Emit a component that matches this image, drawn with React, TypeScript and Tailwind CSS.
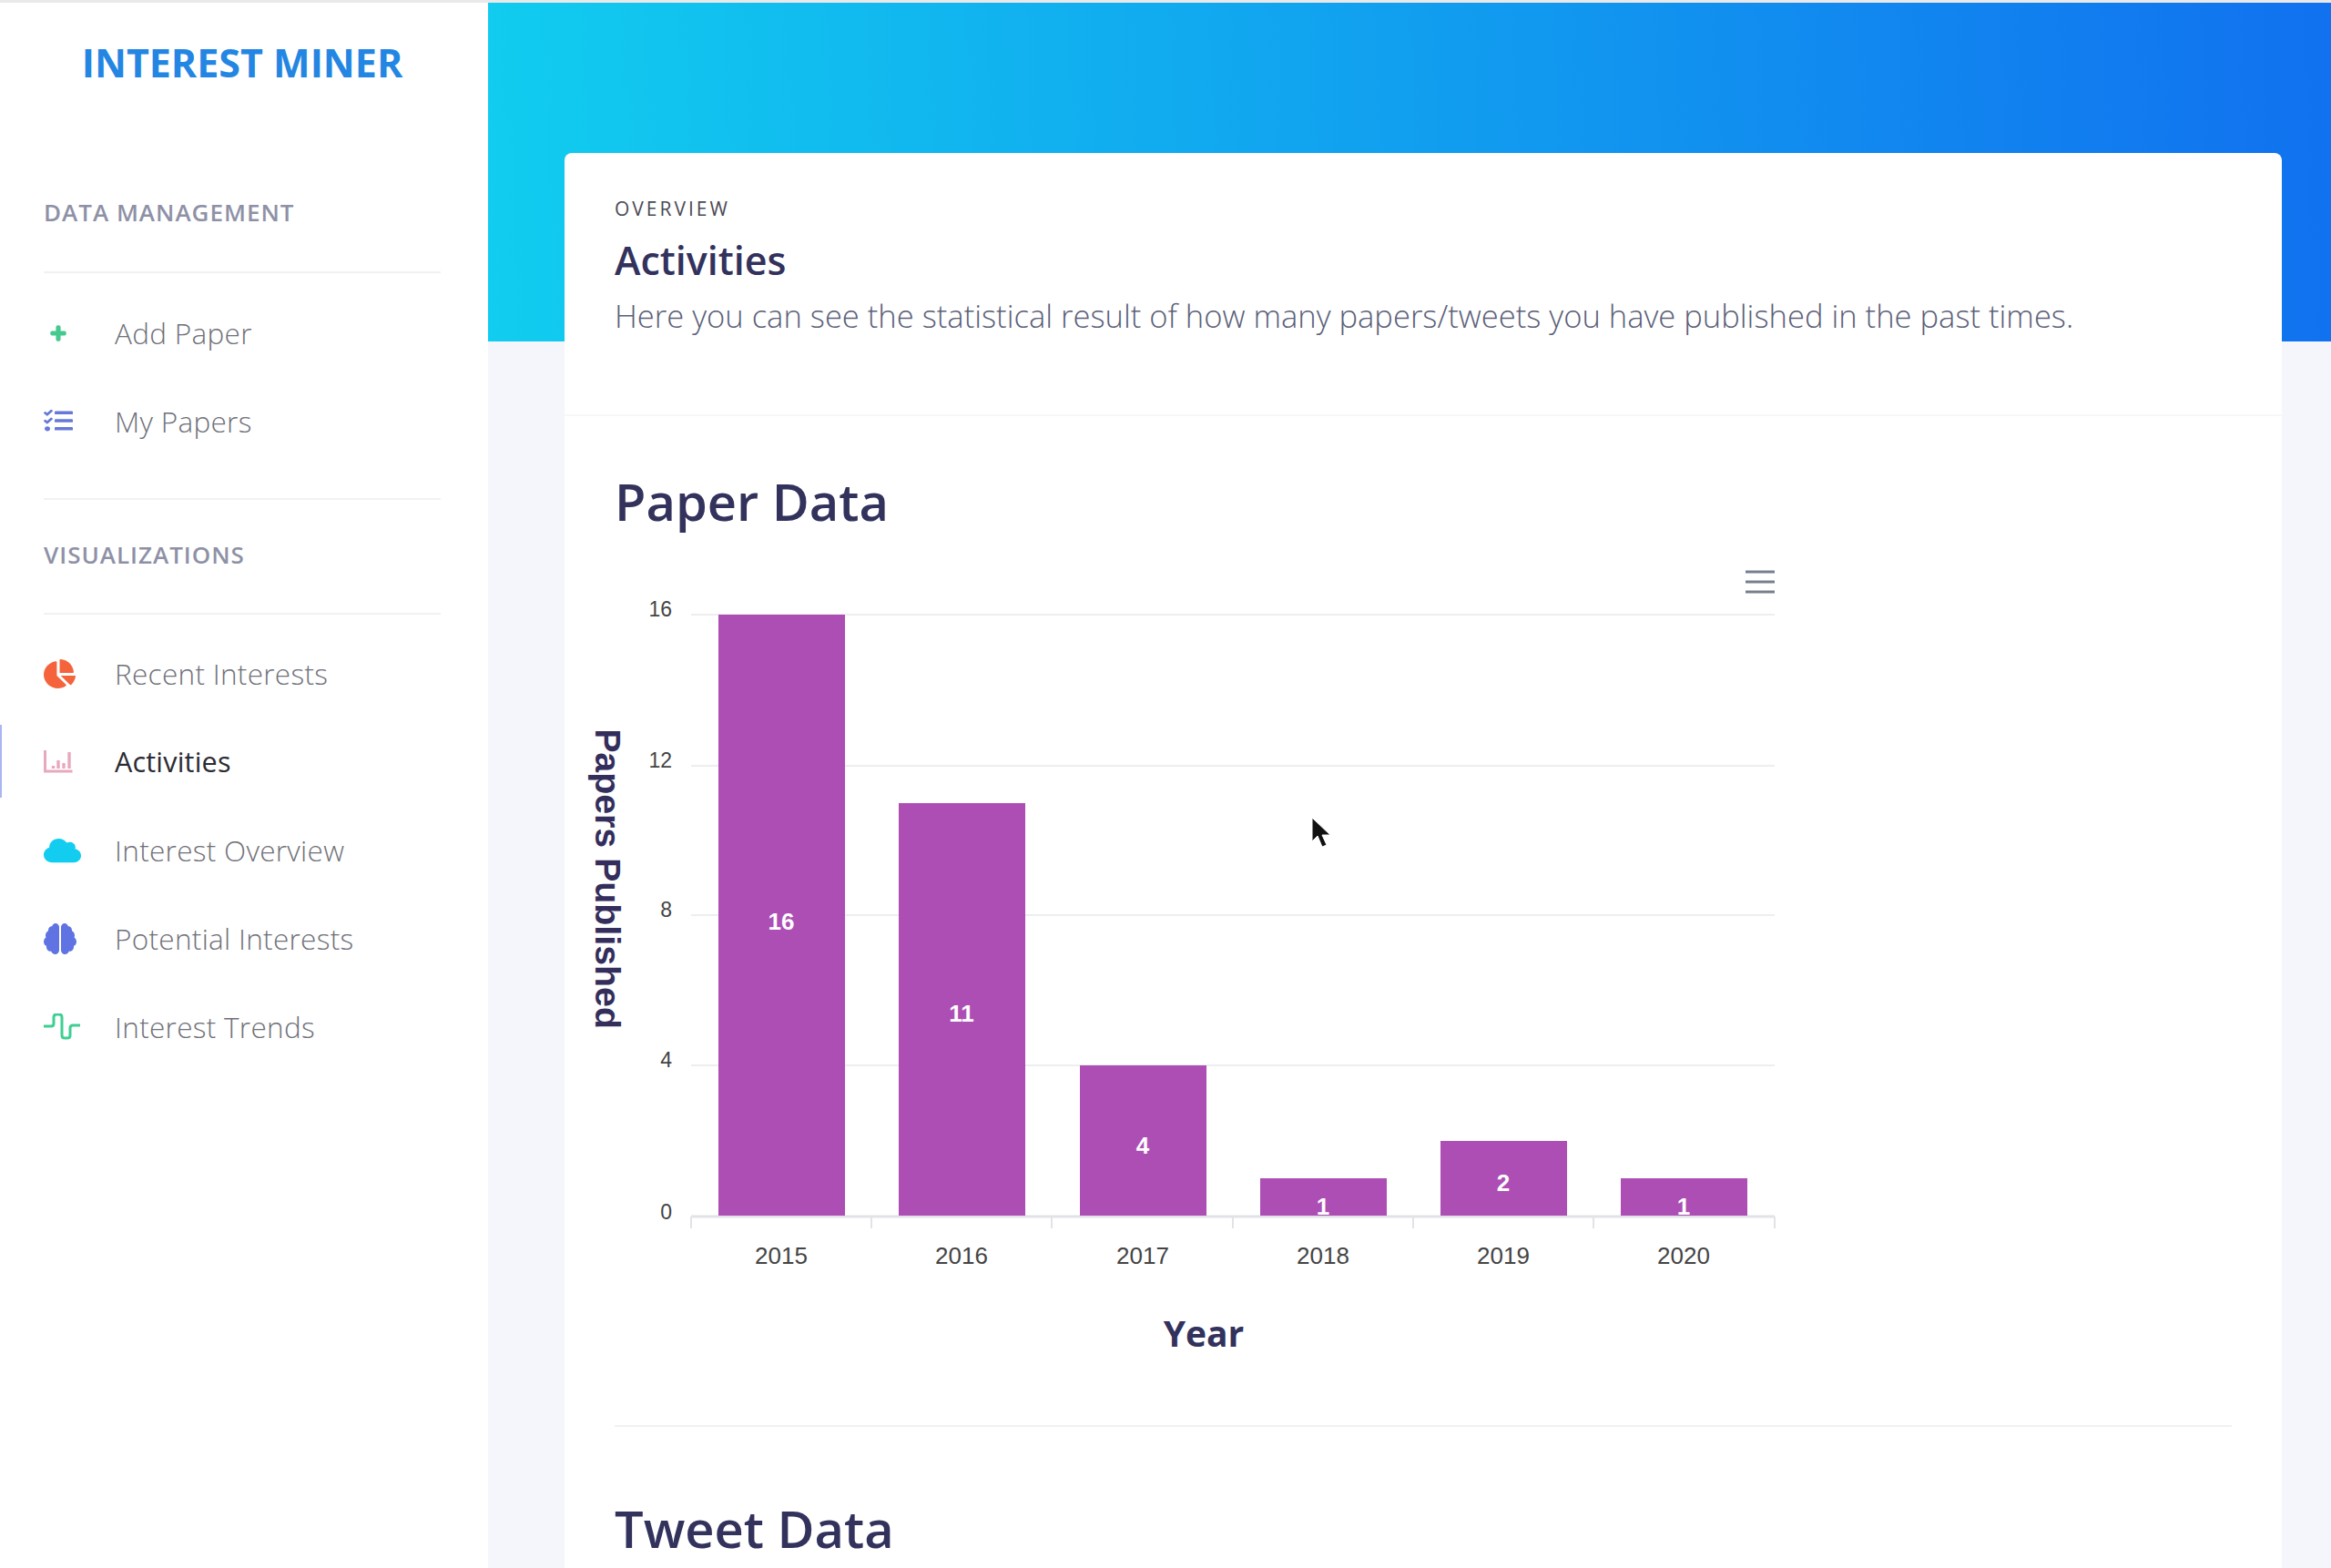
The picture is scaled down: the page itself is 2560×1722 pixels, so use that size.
import React from "react";
import { FaPlus, FaTasks, FaChartPie, FaCloud, FaBrain } from "react-icons/fa";

const bars = [
  { year: "2015", v: "16", x: 789, top: 675, ly: 1012 },
  { year: "2016", v: "11", x: 987, top: 882, ly: 1113 },
  { year: "2017", v: "4", x: 1186, top: 1170, ly: 1258 },
  { year: "2018", v: "1", x: 1384, top: 1294, ly: 1325 },
  { year: "2019", v: "2", x: 1582, top: 1253, ly: 1299 },
  { year: "2020", v: "1", x: 1780, top: 1294, ly: 1325 },
];
const grid = [
  { l: "16", y: 675 },
  { l: "12", y: 841 },
  { l: "8", y: 1005 },
  { l: "4", y: 1170 },
];
const ticks = [759, 957, 1155, 1354, 1552, 1750, 1949];

function BarsIcon() {
  return (
    <svg width="32" height="25" viewBox="0 0 32 25" fill="none">
      <path d="M1.5 0v23h30" stroke="#e8a9bd" strokeWidth="3" />
      <path d="M10.5 20v-3M16 20v-9M22 20v-6M28 20V2" stroke="#e8a9bd" strokeWidth="3.4" />
    </svg>
  );
}
function WaveIcon() {
  return (
    <svg width="40" height="29" viewBox="0 0 40 29" fill="none">
      <path d="M0 14h8q3 0 3-3V4q0-3 3-3h3q3 0 3 3v20q0 3 3 3h3q3 0 3-3v-8q0-3 3-3h8" stroke="#3ecf92" strokeWidth="3" />
    </svg>
  );
}

function NavItem({ icon, label, active }: { icon: React.ReactNode; label: string; active?: boolean }) {
  return (
    <div className="relative flex h-[97px] items-center pl-[48px]">
      {active && <div className="absolute left-0 top-[8px] h-[80px] w-[2px] bg-[#aab6f3]" />}
      <div className="flex w-[78px] shrink-0 items-center">{icon}</div>
      <span className={active ? "text-[30.5px] tracking-[0.2px] text-[#2b2b33]" : "text-[31.5px] font-light tracking-[0.3px] text-[#6f7179]"}>{label}</span>
    </div>
  );
}

function SectionLabel({ children }: { children: React.ReactNode }) {
  return <div className="text-[26px] font-semibold leading-[34px] tracking-[1px] text-[#8e91a6]">{children}</div>;
}

export default function App() {
  return (
    <div className="relative h-[1722px] w-[2560px] overflow-hidden bg-white" style={{ fontFamily: '"Open Sans", sans-serif' }}>
      <div className="h-[3px] bg-[#e9e9ea]" />
      <div className="flex h-[1719px]">
        <aside className="w-[536px] shrink-0 bg-white">
          <div className="pr-[4px] pt-[41px] text-center text-[43px] font-bold leading-[50px] text-[#2486e3]">INTEREST MINER</div>
          <div className="pl-[48px] pr-[52px] pt-[122px]">
            <SectionLabel>DATA MANAGEMENT</SectionLabel>
            <div className="mt-[48px] h-[2px] bg-[#f0f1f3]" />
          </div>
          <div className="pt-[17px] pb-[1px]">
            <NavItem icon={<FaPlus className="ml-[7px]" size={18} color="#45c98f" stroke="#45c98f" strokeWidth={50} />} label="Add Paper" />
            <NavItem icon={<FaTasks color="#6579d8" preserveAspectRatio="none" style={{ width: 32, height: 28, marginTop: -2 }} />} label="My Papers" />
          </div>
          <div className="pl-[48px] pr-[52px] pt-[35px]">
            <div className="h-[2px] bg-[#f0f1f3]" />
            <div className="mt-[43px]"><SectionLabel>VISUALIZATIONS</SectionLabel></div>
            <div className="mt-[47px] h-[2px] bg-[#f0f1f3]" />
          </div>
          <div className="pt-[16px]">
            <NavItem icon={<FaChartPie color="#f5633c" preserveAspectRatio="none" style={{ width: 35, height: 32 }} />} label="Recent Interests" />
            <NavItem active icon={<BarsIcon />} label="Activities" />
            <NavItem icon={<FaCloud color="#13cdf0" preserveAspectRatio="none" style={{ width: 41, height: 30 }} />} label="Interest Overview" />
            <NavItem icon={<FaBrain color="#5f73e2" preserveAspectRatio="none" style={{ width: 36, height: 34 }} />} label="Potential Interests" />
            <NavItem icon={<WaveIcon />} label="Interest Trends" />
          </div>
        </aside>
        <main className="min-w-0 flex-1 bg-[#f5f6fc]">
          <div className="h-[372px] bg-[linear-gradient(87deg,#11cdef,#1171ef)]" />
          <div className="-mt-[207px] ml-[84px] mr-[54px] h-[1600px] rounded-t-[8px] bg-white">
            <div className="h-[289px] border-b-2 border-[#f6f7f9] pl-[55px] pt-[46px]">
              <div className="text-[21px] leading-[30px] tracking-[3px] text-[#4a4a55]">OVERVIEW</div>
              <div className="mt-[14px] text-[43px] font-semibold leading-[56px] text-[#32325d]">Activities</div>
              <div className="mt-[8px] text-[34.55px] font-light leading-[50px] text-[#5a6078]">
                Here you can see the statistical result of how many papers/tweets you have published in the past times.
              </div>
            </div>
            <div className="px-[55px]">
              <h2 className="pt-[56px] text-[56px] font-semibold leading-[75px] text-[#32325d]">Paper Data</h2>
              <svg className="-ml-[55px] mt-[12px] block" width="1340" height="900" viewBox="620 600 1340 900">
                {grid.map((g) => (
                  <g key={g.l}>
                    <line x1="759" x2="1949" y1={g.y} y2={g.y} stroke="#eeeef0" strokeWidth="2" />
                    <text x="738" y={g.y + 2} textAnchor="end" fontFamily="Liberation Sans" fontSize="23" fill="#444">{g.l}</text>
                  </g>
                ))}
                <text x="738" y="1339" textAnchor="end" fontFamily="Liberation Sans" fontSize="23" fill="#444">0</text>
                <line x1="759" x2="1949" y1="1336" y2="1336" stroke="#e2e3e7" strokeWidth="3" />
                {ticks.map((t) => (
                  <line key={t} x1={t} x2={t} y1="1336" y2="1349" stroke="#e2e3e7" strokeWidth="2" />
                ))}
                {bars.map((b) => (
                  <g key={b.year}>
                    <rect x={b.x} y={b.top} width="139" height={1335 - b.top} fill="#a944b1" fillOpacity="0.95" />
                    <clipPath id={`c${b.year}`}>
                      <rect x={b.x} y={b.top} width="139" height={1335 - b.top} />
                    </clipPath>
                    <text clipPath={`url(#c${b.year})`} x={b.x + 69} y={b.ly + 9} textAnchor="middle" fontFamily="Liberation Sans" fontWeight="700" fontSize="26" fill="#fff">{b.v}</text>
                    <text x={b.x + 69} y="1388" textAnchor="middle" fontFamily="Liberation Sans" fontSize="26" fill="#444">{b.year}</text>
                  </g>
                ))}
                <text transform="translate(654 965) rotate(90)" textAnchor="middle" fontFamily="Liberation Sans" fontWeight="700" fontSize="39.3" fill="#332e5c">Papers Published</text>
                <text x="1322" y="1479" textAnchor="middle" fontFamily="Open Sans" fontWeight="700" fontSize="39" fill="#32325d">Year</text>
                <path d="M1917 628h32M1917 639h32M1917 650h32" stroke="#76808f" strokeWidth="3" />
              </svg>
              <div className="mt-[65px] h-[2px] bg-[#f0f1f3]" />
              <h2 className="mt-[74px] text-[56px] font-semibold leading-[75px] text-[#32325d]">Tweet Data</h2>
            </div>
          </div>
        </main>
      </div>
      <svg className="absolute left-[1440px] top-[897px]" width="22" height="36" viewBox="0 0 22 36">
        <path d="M1 1v26l6-6 5 12 5-2-5-11h9z" fill="#111" stroke="#fff" strokeWidth="1" />
      </svg>
    </div>
  );
}
